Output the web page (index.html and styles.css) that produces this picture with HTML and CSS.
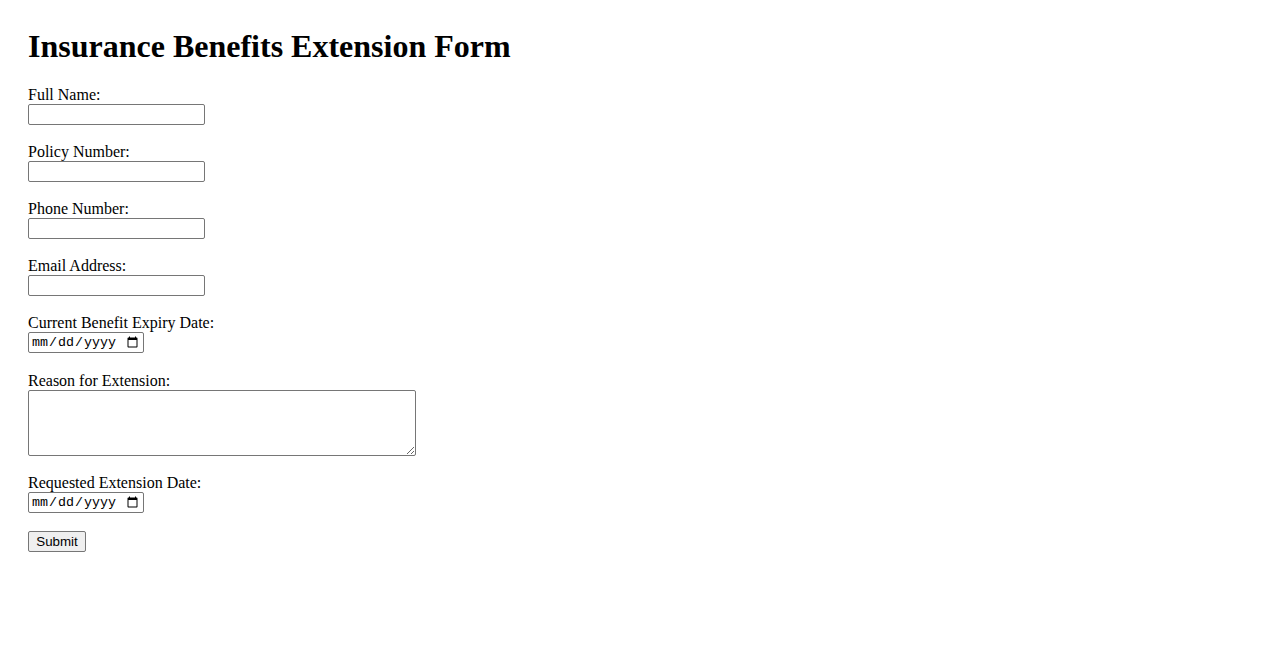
FILE: index.html
```html
<!DOCTYPE html>
<html lang="en">
<head>
<meta charset="utf-8">
<title>Insurance Benefits Extension Form</title>
<link rel="stylesheet" href="styles.css">
</head>
<body>
<h1 class="title">Insurance Benefits Extension Form</h1>
<form class="form">
  <div class="field">
    <label class="label" for="name">Full Name:</label>
    <input class="text" type="text" id="name">
  </div>
  <div class="field">
    <label class="label" for="policy">Policy Number:</label>
    <input class="text" type="text" id="policy">
  </div>
  <div class="field">
    <label class="label" for="phone">Phone Number:</label>
    <input class="text" type="tel" id="phone">
  </div>
  <div class="field">
    <label class="label" for="email">Email Address:</label>
    <input class="text" type="email" id="email">
  </div>
  <div class="field field-loose">
    <label class="label" for="expiry">Current Benefit Expiry Date:</label>
    <input class="date" type="date" id="expiry">
  </div>
  <div class="field">
    <label class="label" for="reason">Reason for Extension:</label>
    <textarea class="area" id="reason"></textarea>
  </div>
  <div class="field">
    <label class="label" for="requested">Requested Extension Date:</label>
    <input class="date" type="date" id="requested">
  </div>
  <div class="field">
    <button class="submit" type="submit">Submit</button>
  </div>
</form>
</body>
</html>
```
FILE: styles.css
```css
html, body {
  background: #ffffff;
}
body {
  margin: 0;
  padding: 28px;
  font-family: "Liberation Serif", "Times New Roman", serif;
  font-size: 16px;
  color: #000;
}
.title {
  margin: 0 0 21px 0;
  font-size: 32px;
  line-height: 37px;
  font-weight: bold;
}
.form {
  display: flex;
  flex-direction: column;
  align-items: flex-start;
}
.field {
  display: flex;
  flex-direction: column;
  align-items: flex-start;
  margin-bottom: 18px;
}
.field-loose {
  margin-bottom: 19px;
}
.label {
  display: block;
  line-height: 18px;
}
.text, .date, .area, .submit {
  box-sizing: border-box;
  border: 1px solid #767676;
  border-radius: 2px;
  margin: 0;
  background: #fff;
  color: #000;
}
.text {
  width: 177px;
  height: 21px;
  padding: 1px 2px;
  font: 13.33px "Liberation Sans", Arial, sans-serif;
}
.date {
  width: 116px;
  height: 21px;
  padding: 1px 2px;
  font: 13.33px "Liberation Mono", "DejaVu Sans Mono", monospace;
}
.area {
  width: 388px;
  height: 66px;
  padding: 2px;
  font: 13.33px "Liberation Mono", monospace;
  resize: both;
}
.submit {
  width: 58px;
  height: 21px;
  padding: 1px 6px;
  background: #efefef;
  font: 13.33px "Liberation Sans", Arial, sans-serif;
}
```
